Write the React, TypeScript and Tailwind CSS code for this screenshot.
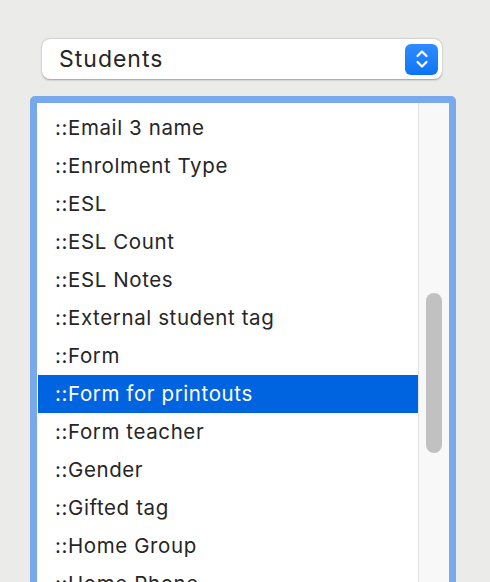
const fields = [
  "::Email 3 name",
  "::Enrolment Type",
  "::ESL",
  "::ESL Count",
  "::ESL Notes",
  "::External student tag",
  "::Form",
  "::Form for printouts",
  "::Form teacher",
  "::Gender",
  "::Gifted tag",
  "::Home Group",
  "::Home Phone",
];

const selected = "::Form for printouts";

export default function App() {
  return (
    <div
      className="w-[490px] h-[582px] bg-[#ebebea] overflow-hidden pt-[39px] text-[#262626]"
      style={{ fontFamily: "Inter, 'Liberation Sans', sans-serif" }}
    >
      {/* popup menu */}
      <div className="ml-[42px] w-[400px] h-[40px] bg-white rounded-[8px] shadow-[0_0.5px_2px_rgba(0,0,0,0.35)] flex items-center pl-[17px] pr-[4px]">
        <span className="flex-1 text-[23px] tracking-[1px]">Students</span>
        <div className="w-[33px] h-[31px] rounded-[6px] bg-gradient-to-b from-[#2f8cff] to-[#0a74f5] flex items-center justify-center">
          <svg width="14" height="22" viewBox="0 0 14 22" fill="none" stroke="white" strokeWidth="2.2" strokeLinecap="round" strokeLinejoin="round">
            <path d="M2.5 8 L7 3.5 L11.5 8" />
            <path d="M2.5 14 L7 18.5 L11.5 14" />
          </svg>
        </div>
      </div>

      {/* field list */}
      <div className="mt-[17px] ml-[30px] w-[426px] h-[500px] border-[7px] border-[#78a9ec] rounded-[5px] bg-white flex overflow-hidden">
        <div className="flex-1 pt-[6px]">
          {fields.map((f) => (
            <div
              key={f}
              className={
                "h-[38px] flex items-center pl-[18px] text-[20.5px] tracking-[0.6px] whitespace-nowrap " +
                (f === selected ? "bg-[#0064e0] text-white ml-px !pl-[17px]" : "")
              }
            >
              {f}
            </div>
          ))}
        </div>
        <div className="w-[31px] bg-[#f8f8f8] border-l border-[#e4e4e4] pt-[190px] pl-[7px]">
          <div className="w-[16px] h-[160px] rounded-full bg-[#c1c1c1]" />
        </div>
      </div>
    </div>
  );
}
